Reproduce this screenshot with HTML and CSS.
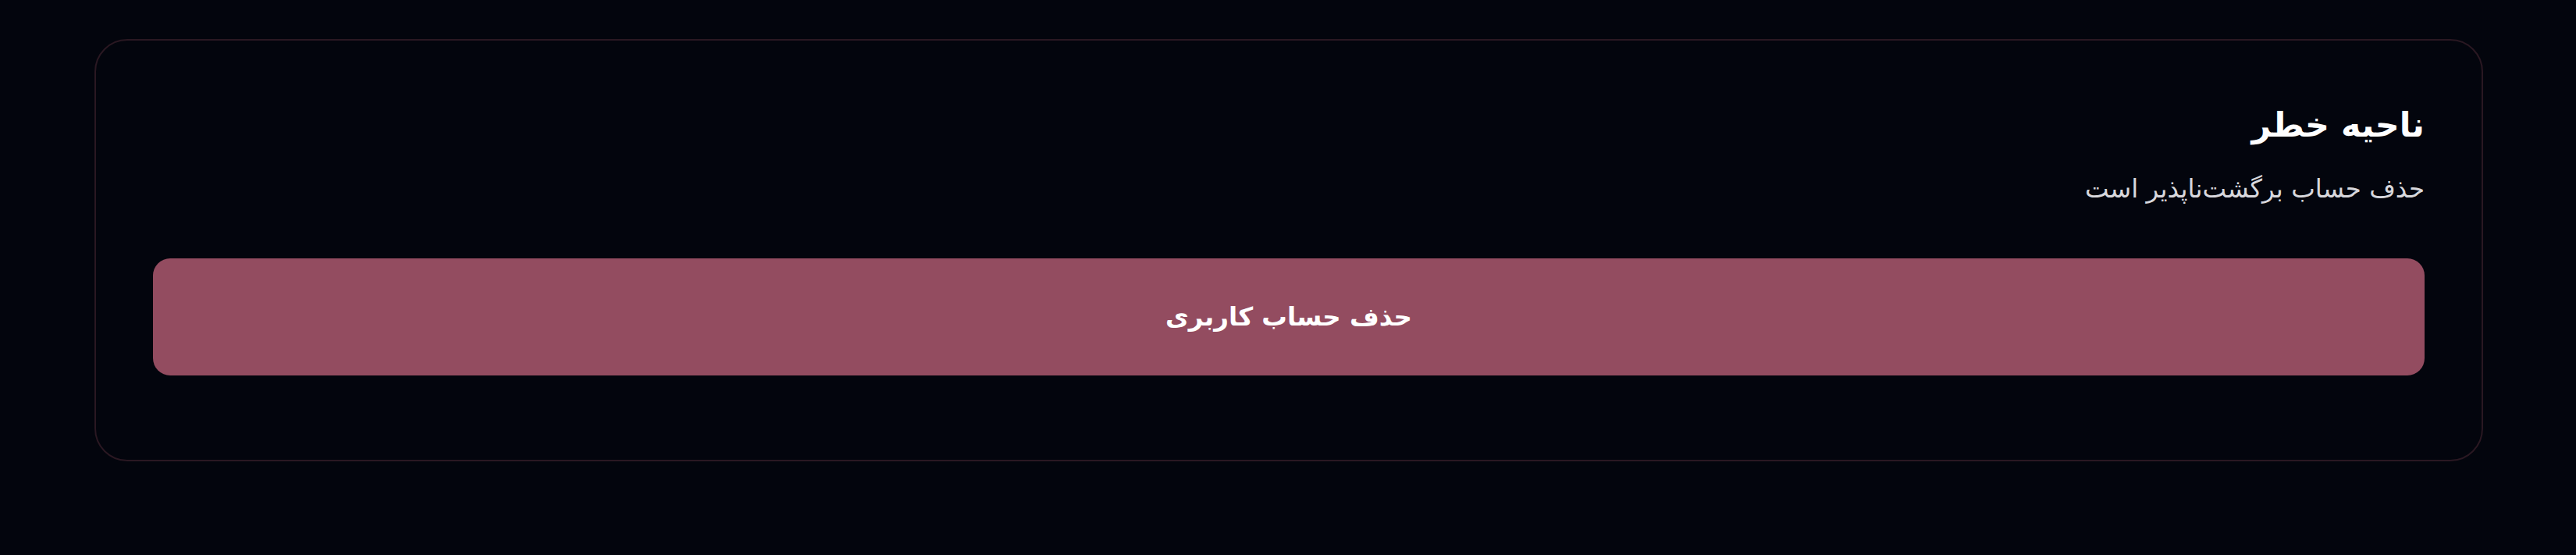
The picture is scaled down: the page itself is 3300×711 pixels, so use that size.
FILE: index.html
```html
<!DOCTYPE html>
<html lang="fa" dir="rtl">
<head>
<meta charset="utf-8">
<title>ناحیه خطر</title>
<link rel="stylesheet" href="styles.css">
</head>
<body>
<main class="page">
  <section class="danger-card">
    <h2 class="danger-title">ناحیه خطر</h2>
    <p class="danger-desc">حذف حساب برگشت‌ناپذیر است</p>
    <button class="danger-btn" type="button">حذف حساب کاربری</button>
  </section>
</main>
</body>
</html>
```
FILE: styles.css
```css
html, body {
  margin: 0;
  padding: 0;
  background: #03050d;
}
body {
  font-family: "DejaVu Sans", sans-serif;
  color: #ffffff;
}
.page {
  padding: 50px 119px 50px 121px;
}
.danger-card {
  border: 2px solid #2a1822;
  border-radius: 42px;
  padding: 76px 73px 108px;
  display: flex;
  flex-direction: column;
}
.danger-title {
  margin: 0;
  font-size: 43px;
  font-weight: 700;
  line-height: 64px;
  color: #ffffff;
}
.danger-desc {
  margin: 26px 0 0;
  font-size: 32.5px;
  line-height: 48px;
  color: #d8d8dd;
}
.danger-btn {
  margin-top: 65px;
  height: 150px;
  border: none;
  border-radius: 22px;
  background: #934c60;
  color: #ffffff;
  font-family: inherit;
  font-size: 32.5px;
  font-weight: 700;
}
```
